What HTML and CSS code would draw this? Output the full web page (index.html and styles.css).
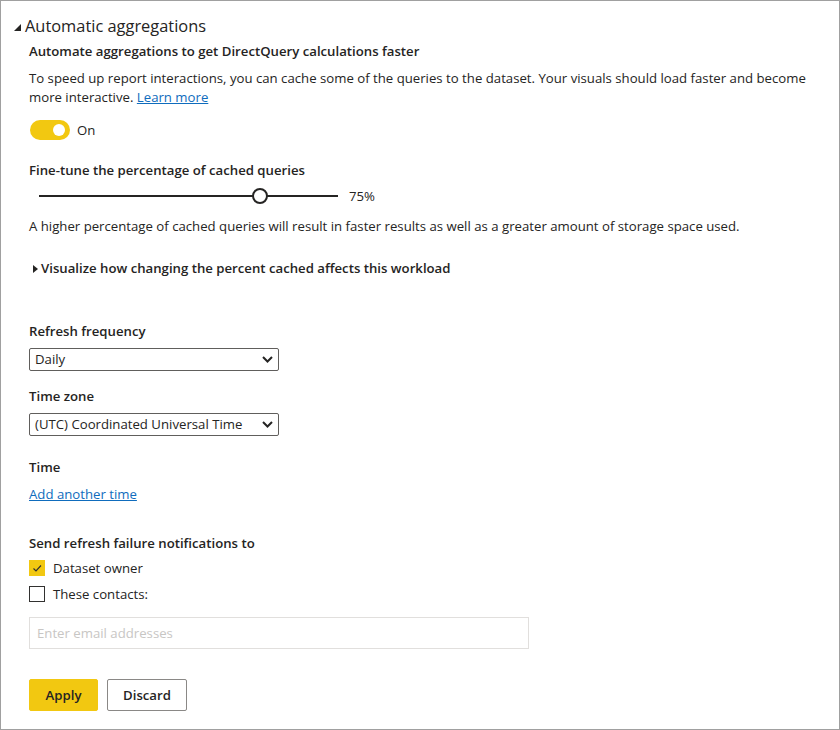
FILE: index.html
```html
<!DOCTYPE html>
<html lang="en">
<head>
<meta charset="utf-8">
<title>Automatic aggregations</title>
<link rel="stylesheet" href="styles.css">
</head>
<body>
<div class="panel">
  <div class="section-header">
    <svg class="tri-down" width="7" height="7" viewBox="0 0 7 7"><polygon points="7,0 7,7 0,7"/></svg>
    <span>Automatic aggregations</span>
  </div>
  <div class="content">
    <div class="title">Automate aggregations to get DirectQuery calculations faster</div>
    <p class="para"><span>To speed up report interactions, you can cache some of the queries to the dataset. Your visuals should load faster and become</span><br><span>more interactive.</span> <a href="#" class="link">Learn more</a></p>

    <div class="toggle-row">
      <span class="toggle"><span class="knob"></span></span>
      <span class="toggle-label">On</span>
    </div>

    <div class="label label-fine">Fine-tune the percentage of cached queries</div>
    <div class="slider-row">
      <div class="slider">
        <div class="track"></div>
        <div class="thumb"></div>
      </div>
      <span class="slider-value">75%</span>
    </div>
    <div class="hint">A higher percentage of cached queries will result in faster results as well as a greater amount of storage space used.</div>

    <div class="expander">
      <svg class="tri-right" width="5" height="8" viewBox="0 0 5 8"><polygon points="0,0 5,4 0,8"/></svg>
      <span>Visualize how changing the percent cached affects this workload</span>
    </div>

    <div class="label label-refresh">Refresh frequency</div>
    <div class="select">
      <span>Daily</span>
      <svg class="chev" width="11" height="7" viewBox="0 0 11 7"><polyline points="1,1 5.5,5.5 10,1"/></svg>
    </div>

    <div class="label label-tz">Time zone</div>
    <div class="select">
      <span>(UTC) Coordinated Universal Time</span>
      <svg class="chev" width="11" height="7" viewBox="0 0 11 7"><polyline points="1,1 5.5,5.5 10,1"/></svg>
    </div>

    <div class="label label-time">Time</div>
    <a href="#" class="link add-time">Add another time</a>

    <div class="label label-send">Send refresh failure notifications to</div>
    <div class="checks">
      <label class="check-row">
        <span class="box checked">
          <svg width="14" height="14" viewBox="0 0 14 14"><polyline points="3.5,7.5 6,10 11,4.5"/></svg>
        </span>
        <span>Dataset owner</span>
      </label>
      <label class="check-row">
        <span class="box"></span>
        <span>These contacts:</span>
      </label>
    </div>

    <input class="email" type="text" placeholder="Enter email addresses">

    <div class="buttons">
      <button class="btn btn-primary">Apply</button>
      <button class="btn btn-secondary">Discard</button>
    </div>
  </div>
</div>
</body>
</html>
```
FILE: styles.css
```css
html, body {
  margin: 0;
  padding: 0;
  background: #ffffff;
}
body {
  font-family: "Open Sans", "Noto Sans", sans-serif;
  font-size: 13.2px;
  line-height: 19px;
  color: #252423;
}
.panel {
  box-sizing: border-box;
  width: 840px;
  height: 730px;
  border: 1px solid #a0a0a0;
  padding-top: 14px;
}
.section-header {
  display: flex;
  align-items: center;
  height: 22px;
  line-height: 22px;
  padding-left: 13px;
  font-size: 16.4px;
  color: #252423;
}
.tri-down {
  fill: #252423;
  margin-right: 4px;
  margin-top: 2px;
}
.content {
  padding-left: 28px;
  padding-right: 18px;
}
.title {
  margin-top: 5px;
  font-weight: 600;
}
.para {
  margin: 8px 0 0 0;
}
.link {
  color: #0f6cbd;
  text-decoration: underline;
}
.toggle-row {
  margin-top: 13px;
  height: 20px;
  display: flex;
  align-items: center;
}
.toggle {
  box-sizing: border-box;
  width: 40px;
  height: 20px;
  border-radius: 10px;
  background: #f2c811;
  display: flex;
  align-items: center;
  justify-content: flex-end;
  padding-right: 5px;
  margin-left: 1px;
}
.knob {
  width: 12px;
  height: 12px;
  border-radius: 50%;
  background: #ffffff;
}
.toggle-label {
  margin-left: 7px;
}
.label {
  font-weight: 600;
}
.label-fine { margin-top: 21px; }
.slider-row {
  margin-top: 6px;
  height: 20px;
  display: flex;
  align-items: center;
  padding-left: 10px;
}
.slider {
  position: relative;
  width: 299px;
  height: 20px;
}
.track {
  position: absolute;
  left: 0;
  right: 0;
  top: 9px;
  height: 2px;
  background: #252423;
}
.thumb {
  position: absolute;
  box-sizing: border-box;
  left: 213px;
  top: 2px;
  width: 16px;
  height: 16px;
  border-radius: 50%;
  border: 2px solid #252423;
  background: #ffffff;
}
.slider-value {
  margin-left: 11px;
}
.hint {
  margin-top: 11px;
}
.expander {
  margin-top: 23px;
  display: flex;
  align-items: center;
  font-weight: 600;
}
.tri-right {
  fill: #252423;
  margin-left: 4px;
  margin-right: 3px;
}
.label-refresh { margin-top: 44px; }
.label-tz { margin-top: 16px; }
.label-time { margin-top: 22px; }
.label-send { margin-top: 30px; }
.select {
  box-sizing: border-box;
  width: 250px;
  height: 23px;
  margin-top: 7px;
  border: 1px solid #605e5c;
  border-radius: 2px;
  display: flex;
  align-items: center;
  justify-content: space-between;
  padding: 0 5px 0 5px;
}
.chev {
  fill: none;
  stroke: #252423;
  stroke-width: 2;
}
.add-time {
  display: block;
  margin-top: 8px;
  width: max-content;
}
.checks {
  margin-top: 5px;
  display: flex;
  flex-direction: column;
  gap: 6px;
}
.check-row {
  display: flex;
  align-items: center;
  height: 20px;
}
.box {
  box-sizing: border-box;
  width: 16px;
  height: 16px;
  margin-right: 8px;
  border: 1px solid #323130;
  display: flex;
  align-items: center;
  justify-content: center;
}
.box.checked {
  background: #f2c811;
  border-color: #f2c811;
}
.box svg {
  fill: none;
  stroke: #323130;
  stroke-width: 1.2;
}
.email {
  display: block;
  box-sizing: border-box;
  width: 500px;
  height: 32px;
  margin-top: 13px;
  border: 1px solid #e1dfdd;
  border-radius: 0;
  padding: 0 7px;
  font-family: "Open Sans", "Noto Sans", sans-serif;
  font-size: 13.2px;
  color: #252423;
  outline: none;
}
.email::placeholder {
  color: #c8c6c4;
}
.buttons {
  margin-top: 30px;
  display: flex;
  gap: 8px;
}
.btn {
  box-sizing: border-box;
  height: 32px;
  border-radius: 2px;
  font-family: "Open Sans", "Noto Sans", sans-serif;
  font-size: 13.2px;
  font-weight: 600;
  color: #252423;
  padding: 0;
  cursor: pointer;
}
.btn-primary {
  width: 69px;
  background: #f2c811;
  border: 1px solid #f2c811;
}
.btn-secondary {
  width: 80px;
  margin-left: 1px;
  background: #ffffff;
  border: 1px solid #8a8886;
}
```
